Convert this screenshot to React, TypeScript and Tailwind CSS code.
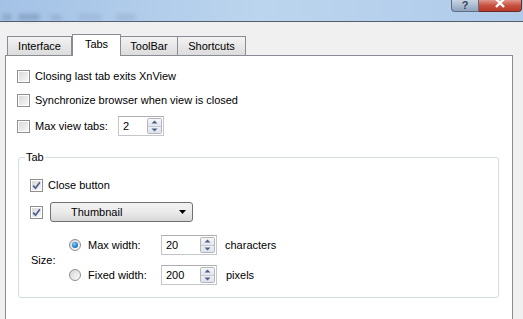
import React from "react";

const font = { fontFamily: '"Liberation Sans", Arial, sans-serif' };

function Checkbox({ checked = false }: { checked?: boolean }) {
  return (
    <div className="w-[13px] h-[13px] shrink-0 border border-[#8e8f8f] bg-white p-px">
      <div className="w-full h-full bg-gradient-to-br from-[#d9d9d9] to-[#f7f7f7] flex items-center justify-center">
        {checked && (
          <svg width="9" height="9" viewBox="0 0 9 9">
            <path d="M1.2 4.6 L3.5 7.2 L7.9 1.2" fill="none" stroke="#4a5d8c" strokeWidth="1.7" />
          </svg>
        )}
      </div>
    </div>
  );
}

function Radio({ checked = false }: { checked?: boolean }) {
  return (
    <div className="w-[12px] h-[12px] shrink-0 rounded-full border border-[#8e8f8f] bg-gradient-to-br from-[#d6d6d6] to-[#fbfbfb] flex items-center justify-center">
      {checked && (
        <div className="w-[6px] h-[6px] rounded-full bg-[radial-gradient(circle_at_40%_35%,#7fd0ff,#1b7bc4_60%,#0d4f8a)]" />
      )}
    </div>
  );
}

function Arrow({ up }: { up: boolean }) {
  return (
    <svg width="7" height="4" viewBox="0 0 7 4">
      {up ? <path d="M0.5 3.5 L3.5 0.5 L6.5 3.5 Z" fill="#4d5f87" /> : <path d="M0.5 0.5 L3.5 3.5 L6.5 0.5 Z" fill="#4d5f87" />}
    </svg>
  );
}

function Spin({ value, w }: { value: string; w: string }) {
  return (
    <div className={`${w} h-[20px] flex border border-[#c4c6cc] border-t-[#abadb3] bg-white`}>
      <span className="flex-1 pl-[4px] leading-[18px] text-[11px] text-black">{value}</span>
      <div className="w-[15px] flex flex-col my-px mr-px border border-[#b3b6bc] rounded-[2px] overflow-hidden">
        <div className="flex-1 flex items-center justify-center bg-gradient-to-b from-[#f6f6f6] to-[#e2e6ee] border-b border-[#c5c8ce]">
          <Arrow up />
        </div>
        <div className="flex-1 flex items-center justify-center bg-gradient-to-b from-[#eef0f4] to-[#dde2ea]">
          <Arrow up={false} />
        </div>
      </div>
    </div>
  );
}

export default function App() {
  return (
    <div className="w-[523px] h-[319px] overflow-hidden bg-[#f0f0f0] flex flex-col text-[11px] text-black" style={font}>
      {/* title bar */}
      <div className="h-[21px] shrink-0 flex justify-between items-start bg-gradient-to-r from-[#a3c2e6] via-[#bcd5ee] to-[#afcbea]">
        <div className="flex items-end gap-[6px] h-[21px] pb-[1px] pl-[2px] blur-[2px] opacity-40">
          <div className="w-[10px] h-[6px] bg-[#6c7f96] rounded-sm" />
          <div className="w-[22px] h-[6px] bg-[#5f7694] rounded-sm" />
          <div className="w-[12px] h-[5px] bg-[#7b8fae] rounded-sm ml-[4px]" />
          <div className="w-[24px] h-[6px] bg-[#8fa3c3] rounded-sm ml-[10px]" />
          <div className="w-[20px] h-[6px] bg-[#8b9fc0] rounded-sm ml-[8px]" />
        </div>
        <div className="flex mr-[1px]">
          <div className="w-[28px] h-[12px] rounded-bl-[4px] border border-t-0 border-[#5e6e82] bg-gradient-to-b from-[#c9d5e3] to-[#8ea3bd] flex items-start justify-center">
            <span className="text-[11px] leading-[10px] font-bold text-[#36455c]">?</span>
          </div>
          <div className="w-[43px] h-[12px] rounded-br-[4px] border border-t-0 border-l-0 border-[#6b2a22] bg-gradient-to-b from-[#e0958a] via-[#c8503f] to-[#b8392a] flex items-start justify-center">
            <svg width="12" height="8" viewBox="0 0 12 8">
              <path d="M2 -1 L10 7 M10 -1 L2 7" stroke="#fff" strokeWidth="2.4" />
            </svg>
          </div>
        </div>
      </div>
      <div className="h-px shrink-0 bg-[#525e6c]" />

      <div className="flex-1 flex flex-col pl-[5px] pt-[12px]">
        {/* tabs */}
        <div className="h-[21px] flex items-end pl-[2px] relative z-10">
          <div className="w-[65px] h-[19px] border border-b-0 border-[#898c95] bg-gradient-to-b from-[#f3f3f3] to-[#dcdcdc] flex items-center justify-center leading-none">
            Interface
          </div>
          <div className="w-[49px] h-[22px] -mb-px border border-b-0 border-[#898c95] bg-white flex items-center justify-center leading-none pb-[2px]">
            Tabs
          </div>
          <div className="w-[57px] h-[19px] border border-b-0 border-l-0 border-[#898c95] bg-gradient-to-b from-[#f3f3f3] to-[#dcdcdc] flex items-center justify-center leading-none">
            ToolBar
          </div>
          <div className="w-[68px] h-[19px] border border-b-0 border-l-0 border-[#898c95] bg-gradient-to-b from-[#f3f3f3] to-[#dcdcdc] flex items-center justify-center leading-none">
            Shortcuts
          </div>
        </div>

        {/* panel */}
        <div className="w-[508px] flex-1 border border-b-0 border-[#898c95] bg-white flex flex-col pl-[11px] pt-[10px]">
          <div className="h-[20px] flex items-center gap-[5px]">
            <Checkbox />
            <span>Closing last tab exits XnView</span>
          </div>
          <div className="h-[20px] mt-[4px] flex items-center gap-[5px]">
            <Checkbox />
            <span>Synchronize browser when view is closed</span>
          </div>
          <div className="h-[20px] mt-[6px] flex items-center gap-[5px]">
            <Checkbox />
            <span className="w-[78px]">Max view tabs:</span>
            <Spin value="2" w="w-[46px]" />
          </div>

          <fieldset className="w-[481px] ml-[1px] mt-[15px] h-[147px] border border-[#d5dde3] rounded-[3px] pl-[11px]">
            <legend className="-ml-[5px] px-[1px] leading-[13px]">Tab</legend>
            <div className="h-[20px] mt-[11px] flex items-center gap-[5px]">
              <Checkbox checked />
              <span>Close button</span>
            </div>
            <div className="h-[20px] mt-[7px] flex items-center gap-[7px]">
              <Checkbox checked />
              <div className="w-[143px] h-[20px] rounded-[3px] border border-[#707070] bg-gradient-to-b from-[#f2f2f2] via-[#ebebeb] to-[#d8d8d8] flex items-center pl-[20px] pr-[6px]">
                <span className="flex-1">Thumbnail</span>
                <svg width="7" height="4" viewBox="0 0 7 4">
                  <path d="M0 0 L7 0 L3.5 4 Z" fill="#000" />
                </svg>
              </div>
            </div>
            <div className="mt-[13px] flex items-center">
              <span className="w-[38px] ml-[1px]">Size:</span>
              <div className="flex flex-col gap-[10px]">
                <div className="h-[20px] flex items-center">
                  <Radio checked />
                  <span className="w-[73px] ml-[7px]">Max width:</span>
                  <Spin value="20" w="w-[56px]" />
                  <span className="ml-[8px]">characters</span>
                </div>
                <div className="h-[20px] flex items-center">
                  <Radio />
                  <span className="w-[73px] ml-[7px]">Fixed width:</span>
                  <Spin value="200" w="w-[56px]" />
                  <span className="ml-[9px]">pixels</span>
                </div>
              </div>
            </div>
          </fieldset>
        </div>
      </div>
    </div>
  );
}
